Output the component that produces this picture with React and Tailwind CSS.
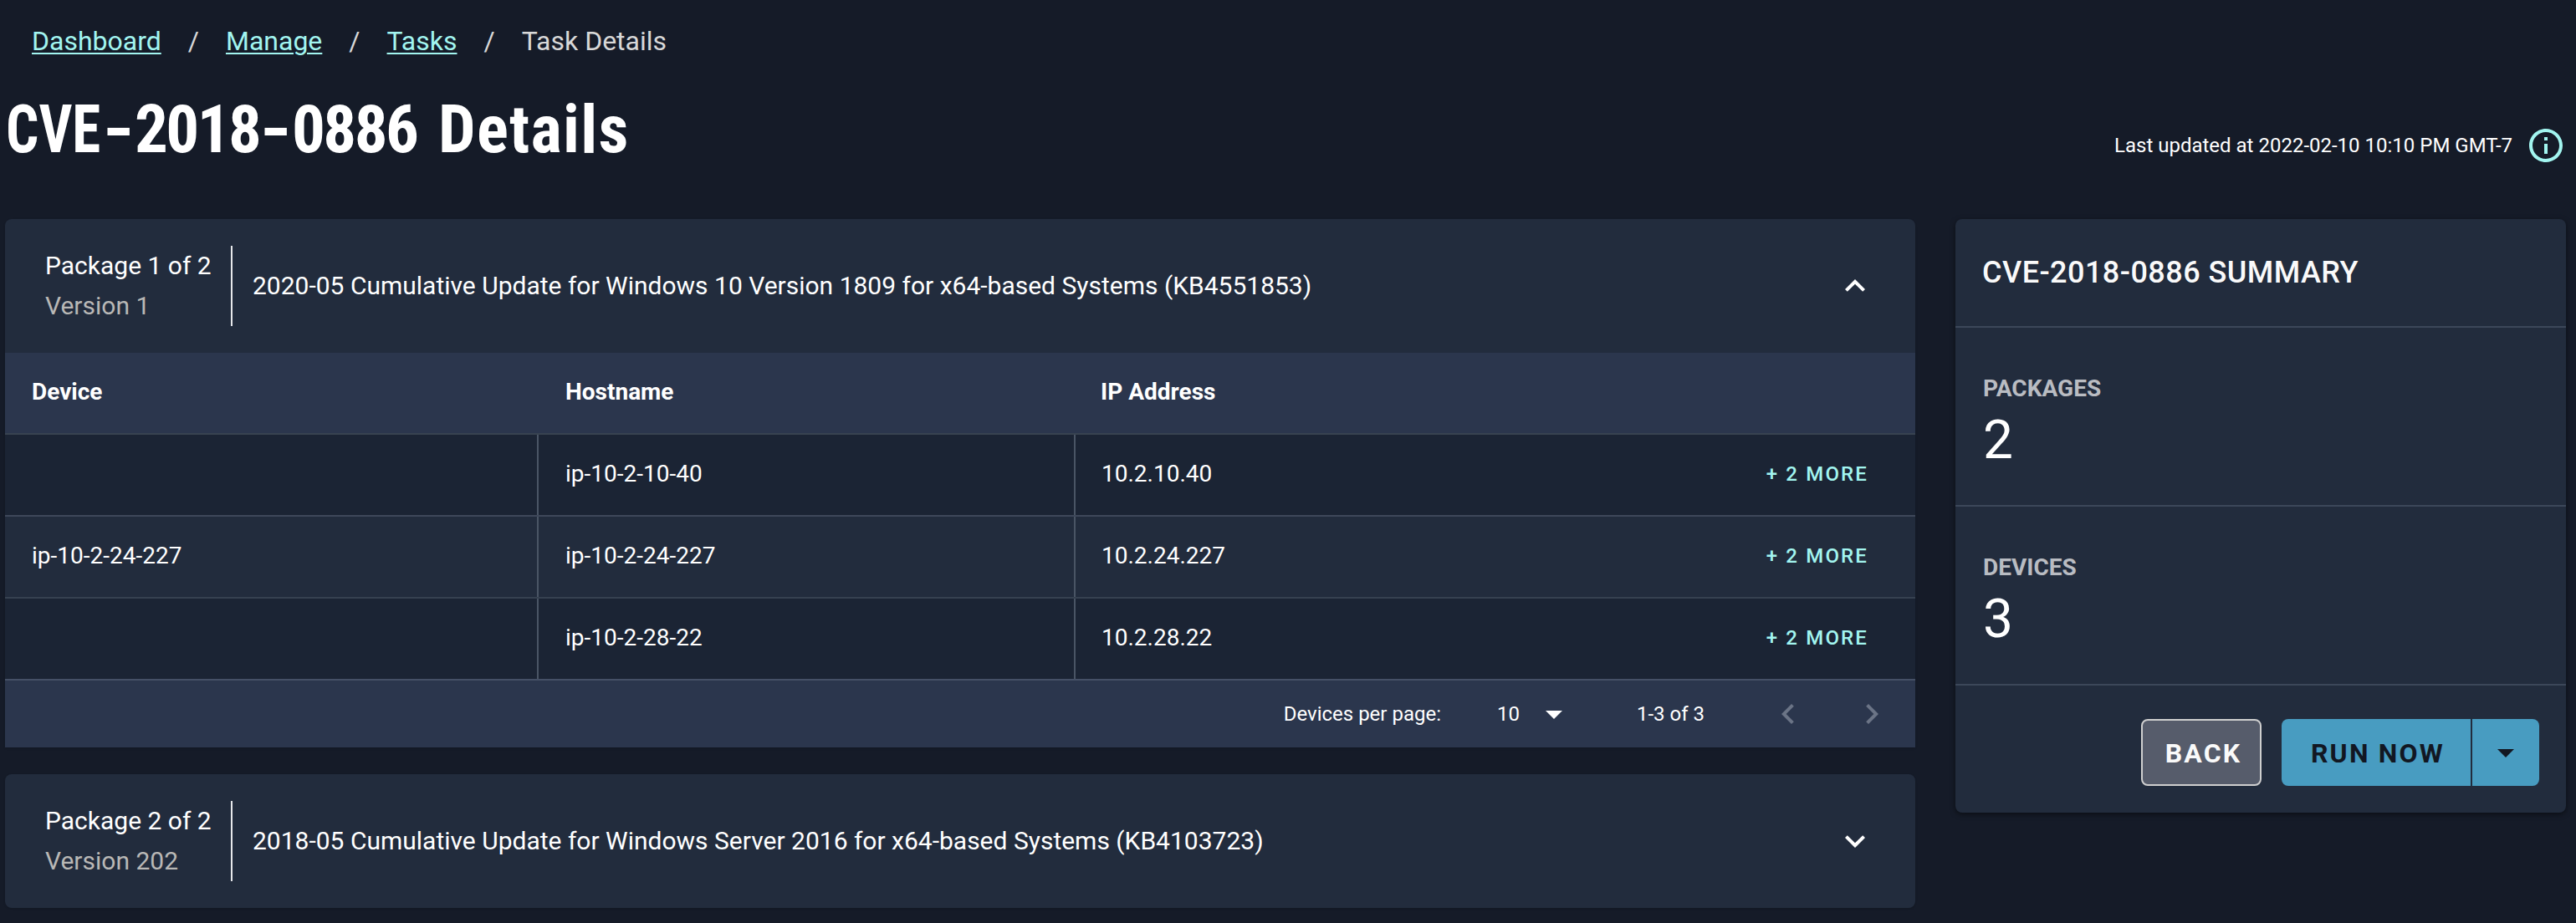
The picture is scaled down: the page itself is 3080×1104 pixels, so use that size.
import React from "react";

function Icon({ d, className }) {
  return (
    <svg viewBox="0 0 24 24" fill="currentColor" className={`size-12 shrink-0 ${className || ""}`}>
      <path d={d} />
    </svg>
  );
}

const ICONS = {
  info: "M11 7h2v2h-2zm0 4h2v6h-2zm1-9C6.48 2 2 6.48 2 12s4.48 10 10 10 10-4.48 10-10S17.52 2 12 2zm0 18c-4.41 0-8-3.59-8-8s3.59-8 8-8 8 3.59 8 8-3.59 8-8 8z",
  up: "M12 8l-6 6 1.41 1.41L12 10.83l4.59 4.58L18 14z",
  down: "M16.59 8.59L12 13.17 7.41 8.59 6 10l6 6 6-6z",
  left: "M15.41 7.41L14 6l-6 6 6 6 1.41-1.41L10.83 12z",
  right: "M10 6L8.59 7.41 13.17 12l-4.58 4.59L10 18l6-6z",
  caret: "M7 10l5 5 5-5z",
};

const LINKS = ["Dashboard", "Manage", "Tasks"];

const ROWS = [
  { device: "", host: "ip-10-2-10-40", ip: "10.2.10.40", bg: "bg-[#1b2434]", line: "border-[#3e485a]" },
  { device: "ip-10-2-24-227", host: "ip-10-2-24-227", ip: "10.2.24.227", bg: "bg-[#222c3d]", line: "border-[#364150]" },
  { device: "", host: "ip-10-2-28-22", ip: "10.2.28.22", bg: "bg-[#1b2434]", line: "border-[#455066]" },
];

function PackageHeader({ index, version, title, open }) {
  return (
    <div className="flex h-40 items-center bg-[#222c3d] px-12">
      <div className="flex h-24 w-[224px] shrink-0 flex-col border-r-2 border-[#e6e8eb] text-[30px] leading-[48px] whitespace-nowrap">
        <span>Package {index} of 2</span>
        <span className="text-[#b9b8b6]">Version {version}</span>
      </div>
      <div className="grow pl-6 text-[30px] leading-[48px]">{title}</div>
      <Icon d={open ? ICONS.up : ICONS.down} />
    </div>
  );
}

function Stat({ label, value }) {
  return (
    <div className="h-[214px] border-b-2 border-[#3c4759] pt-[52px] pl-[33px]">
      <div className="text-[28px] leading-[41px] font-bold text-[#b9bcc2]">{label}</div>
      <div className="text-[64px] leading-[83px]">{value}</div>
    </div>
  );
}

export default function App() {
  return (
    <div className="h-[1104px] w-[3080px] overflow-hidden bg-[#151b28] font-[Roboto,sans-serif] text-white">
      <nav className="flex h-[98px] items-center gap-8 pl-[38px] text-[32px] leading-[38px] text-[#d8d8d8]">
        {LINKS.map((l) => (
          <React.Fragment key={l}>
            <a className="text-[#a2f5f0] underline decoration-2 underline-offset-[3px]">{l}</a>
            <span>/</span>
          </React.Fragment>
        ))}
        <span>Task Details</span>
      </nav>

      <header className="flex h-[164px] items-start justify-between pr-3 pl-[7px]">
        <h1 className="flex text-[79px] leading-[114px] font-bold whitespace-pre [font-stretch:75%]">
          <span className="w-[115px] origin-left scale-x-[0.875]">CVE</span>
          <span className="w-[39px] origin-left scale-x-[1.4]">-</span>
          <span className="w-[149px] tracking-[-2.6px]">2018</span>
          <span className="w-[39px] origin-left scale-x-[1.4]">-</span>
          <span className="w-[175px] tracking-[-2.6px]">{"0886 "}</span>
          <span className="tracking-[1.3px]">Details</span>
        </h1>
        <div className="flex items-center gap-4 pt-[52px] text-[24px] leading-[48px]">
          <span>Last updated at 2022-02-10 10:10 PM GMT-7</span>
          <Icon d={ICONS.info} className="text-[#a2f5f0]" />
        </div>
      </header>

      <main className="flex items-start gap-12 pr-3 pl-[6px]">
        <div className="flex w-[2284px] flex-col gap-8">
          <section className="overflow-hidden rounded-t-lg shadow-sm">
            <PackageHeader
              index={1}
              version="1"
              open
              title="2020-05 Cumulative Update for Windows 10 Version 1809 for x64-based Systems (KB4551853)"
            />
            <div className="flex h-[98px] border-b-2 border-[#384350] bg-[#2b364d] pl-8 text-[28px] leading-[93px] font-bold">
              <div className="w-[638px]">Device</div>
              <div className="w-[640px]">Hostname</div>
              <div>IP Address</div>
            </div>
            {ROWS.map((r) => (
              <div key={r.host} className={`flex h-[98px] border-b-2 text-[28px] leading-[93px] ${r.bg} ${r.line}`}>
                <div className="w-[638px] border-r-2 border-[#4a5565] pl-8">{r.device}</div>
                <div className="w-[642px] border-r-2 border-[#4a5565] pl-8">{r.host}</div>
                <div className="grow pl-[31px]">{r.ip}</div>
                <div className="pr-[56px] text-[24px] leading-[95px] font-medium tracking-[2.14px] text-[#a2f5f0]">+ 2 MORE</div>
              </div>
            ))}
            <div className="flex h-20 items-center justify-end bg-[#2b364d] pr-7 text-[24px] leading-[48px]">
              <span className="mr-[67px]">Devices per page:</span>
              <span className="mr-[17px]">10</span>
              <Icon d={ICONS.caret} className="mr-[75px]" />
              <span className="mr-[76px]">1-3 of 3</span>
              <Icon d={ICONS.left} className="mr-[52px] text-[#6b7486]" />
              <Icon d={ICONS.right} className="text-[#6b7486]" />
            </div>
          </section>

          <section className="overflow-hidden rounded-lg shadow-sm">
            <PackageHeader
              index={2}
              version="202"
              title="2018-05 Cumulative Update for Windows Server 2016 for x64-based Systems (KB4103723)"
            />
          </section>
        </div>

        <aside className="h-[710px] w-[730px] rounded-lg bg-[#222c3d] shadow-[0_2px_6px_rgba(0,0,0,0.5)]">
          <h2 className="h-[130px] border-b-2 border-[#3c4759] pl-8 text-[36px] leading-[128px] font-medium tracking-[0.0125em] text-[#fafafa]">
            CVE-2018-0886 SUMMARY
          </h2>
          <Stat label="PACKAGES" value="2" />
          <Stat label="DEVICES" value="3" />
          <div className="flex justify-end pt-10 pr-8 text-[32px] leading-[82px] font-bold tracking-[2.2px]">
            <button className="mr-6 h-20 w-36 rounded-lg border-2 border-[#cfcfcf] bg-[#565c6b] pl-[5px] leading-[78px] text-[#fafafa]">BACK</button>
            <button className="h-20 w-[226px] rounded-l-lg bg-[#489cc1] pl-[4px] text-[#121722]">RUN NOW</button>
            <button className="ml-[2px] flex h-20 w-20 items-center justify-center rounded-r-lg bg-[#489cc1] text-[#121722]">
              <Icon d={ICONS.caret} />
            </button>
          </div>
        </aside>
      </main>
    </div>
  );
}
